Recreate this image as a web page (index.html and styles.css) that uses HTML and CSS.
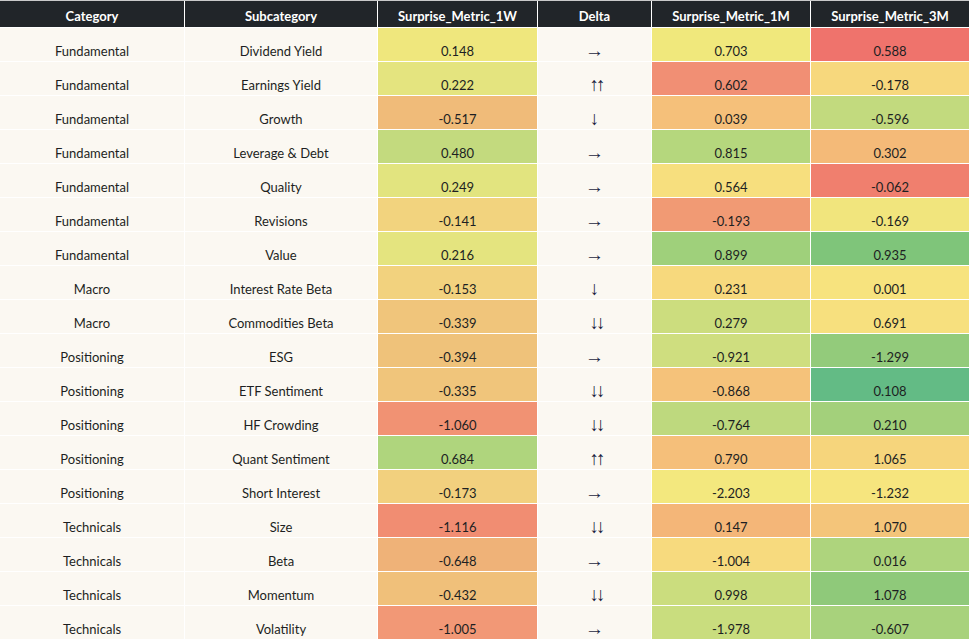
FILE: index.html
```html
<!DOCTYPE html>
<html lang="en">
<head>
<meta charset="utf-8">
<title>Surprise Metrics</title>
<link rel="stylesheet" href="styles.css">
</head>
<body>
<div class="table">
  <div class="th">Category</div><div class="th">Subcategory</div><div class="th">Surprise_Metric_1W</div><div class="th">Delta</div><div class="th">Surprise_Metric_1M</div><div class="th">Surprise_Metric_3M</div>

  <div class="td">Fundamental</div><div class="td">Dividend Yield</div><div class="td" style="background:#efe77d">0.148</div><div class="td arrow">→</div><div class="td" style="background:#f0e87c">0.703</div><div class="td" style="background:#ef736c">0.588</div>
  <div class="td">Fundamental</div><div class="td">Earnings Yield</div><div class="td" style="background:#e4e47f">0.222</div><div class="td arrow dbl">↑↑</div><div class="td" style="background:#f18f74">0.602</div><div class="td" style="background:#f7d87d">-0.178</div>
  <div class="td">Fundamental</div><div class="td">Growth</div><div class="td" style="background:#f0bb79">-0.517</div><div class="td arrow">↓</div><div class="td" style="background:#f5c07a">0.039</div><div class="td" style="background:#c2da7e">-0.596</div>
  <div class="td">Fundamental</div><div class="td">Leverage &amp; Debt</div><div class="td" style="background:#c3da7e">0.480</div><div class="td arrow">→</div><div class="td" style="background:#b5d77d">0.815</div><div class="td" style="background:#f4ba78">0.302</div>
  <div class="td">Fundamental</div><div class="td">Quality</div><div class="td" style="background:#e2e47f">0.249</div><div class="td arrow">→</div><div class="td" style="background:#f7df7e">0.564</div><div class="td" style="background:#f07f6e">-0.062</div>
  <div class="td">Fundamental</div><div class="td">Revisions</div><div class="td" style="background:#f2d37e">-0.141</div><div class="td arrow">→</div><div class="td" style="background:#f19a74">-0.193</div><div class="td" style="background:#f1e57d">-0.169</div>
  <div class="td">Fundamental</div><div class="td">Value</div><div class="td" style="background:#e4e47f">0.216</div><div class="td arrow">→</div><div class="td" style="background:#9fd07b">0.899</div><div class="td" style="background:#7fc57a">0.935</div>
  <div class="td">Macro</div><div class="td">Interest Rate Beta</div><div class="td" style="background:#f2d27e">-0.153</div><div class="td arrow">↓</div><div class="td" style="background:#f7d97d">0.231</div><div class="td" style="background:#f7e37e">0.001</div>
  <div class="td">Macro</div><div class="td">Commodities Beta</div><div class="td" style="background:#f0c57b">-0.339</div><div class="td arrow dbl">↓↓</div><div class="td" style="background:#ccdd7e">0.279</div><div class="td" style="background:#f7e07e">0.691</div>
  <div class="td">Positioning</div><div class="td">ESG</div><div class="td" style="background:#efc27a">-0.394</div><div class="td arrow">→</div><div class="td" style="background:#cfde7f">-0.921</div><div class="td" style="background:#93cb7b">-1.299</div>
  <div class="td">Positioning</div><div class="td">ETF Sentiment</div><div class="td" style="background:#f0c57b">-0.335</div><div class="td arrow dbl">↓↓</div><div class="td" style="background:#f5c27a">-0.868</div><div class="td" style="background:#63bb85">0.108</div>
  <div class="td">Positioning</div><div class="td">HF Crowding</div><div class="td" style="background:#f19273">-1.060</div><div class="td arrow dbl">↓↓</div><div class="td" style="background:#bed97e">-0.764</div><div class="td" style="background:#a3d07b">0.210</div>
  <div class="td">Positioning</div><div class="td">Quant Sentiment</div><div class="td" style="background:#afd57d">0.684</div><div class="td arrow dbl">↑↑</div><div class="td" style="background:#f5bf7a">0.790</div><div class="td" style="background:#f6d57c">1.065</div>
  <div class="td">Positioning</div><div class="td">Short Interest</div><div class="td" style="background:#f2d07e">-0.173</div><div class="td arrow">→</div><div class="td" style="background:#f3e87e">-2.203</div><div class="td" style="background:#f6e57e">-1.232</div>
  <div class="td">Technicals</div><div class="td">Size</div><div class="td" style="background:#f18d72">-1.116</div><div class="td arrow dbl">↓↓</div><div class="td" style="background:#f4b678">0.147</div><div class="td" style="background:#f4c57a">1.070</div>
  <div class="td">Technicals</div><div class="td">Beta</div><div class="td" style="background:#efb278">-0.648</div><div class="td arrow">→</div><div class="td" style="background:#f7da7e">-1.004</div><div class="td" style="background:#aed47d">0.016</div>
  <div class="td">Technicals</div><div class="td">Momentum</div><div class="td" style="background:#f0c07a">-0.432</div><div class="td arrow dbl">↓↓</div><div class="td" style="background:#cbdd7e">0.998</div><div class="td" style="background:#8fc97a">1.078</div>
  <div class="td">Technicals</div><div class="td">Volatility</div><div class="td" style="background:#f29876">-1.005</div><div class="td arrow">→</div><div class="td" style="background:#c9dd7e">-1.978</div><div class="td" style="background:#a8d27c">-0.607</div>
</div>
</body>
</html>
```

FILE: styles.css
```css
html, body {
  margin: 0;
  padding: 0;
  background: #ffffff;
}

body {
  font-family: "Lato", "Liberation Sans", sans-serif;
  font-size: 13px;
  color: #212529;
}

.table {
  display: grid;
  grid-template-columns: 184px 192px 159px 113px 158px 158px;
  grid-auto-rows: 33px;
  grid-template-rows: 26px;
  gap: 1px;
  width: 969px;
  background: #ffffff;
  border-top: 1px solid #c9c9c9;
  overflow: hidden;
}

.th {
  background: #212529;
  color: #ffffff;
  font-weight: 700;
  line-height: 16px;
  display: flex;
  align-items: flex-end;
  justify-content: center;
  padding-bottom: 3px;
  box-sizing: border-box;
}

.td {
  background: #fbf8f2;
  line-height: 16px;
  display: flex;
  align-items: flex-end;
  justify-content: center;
  padding-bottom: 2px;
  box-sizing: border-box;
  color: #1d1f22;
}

.arrow {
  font-family: "Liberation Sans", "DejaVu Sans", sans-serif;
  font-size: 19px;
  color: #1d1f40;
}

.dbl {
  letter-spacing: -3px;
  padding-left: 3px;
}
```
